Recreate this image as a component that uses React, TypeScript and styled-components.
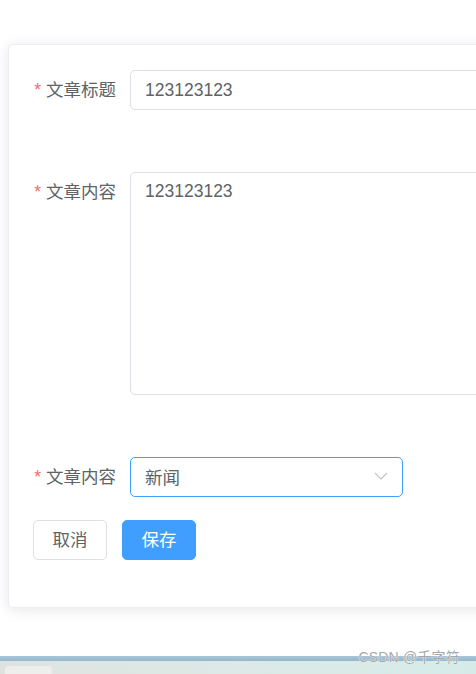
import styled, { createGlobalStyle } from 'styled-components'

const GlobalStyle = createGlobalStyle`
  html, body {
    margin: 0;
    padding: 0;
    background: #ffffff;
    overflow: hidden;
  }

  body {
    font-family: 'Liberation Sans', 'Noto Sans CJK SC', sans-serif;
  }
`

const Page = styled.div`
  width: 476px;
  height: 674px;
  display: flex;
  flex-direction: column;
  overflow: hidden;
  position: relative;
`

const Main = styled.div`
  flex: 1;
  padding: 44px 0 0 8px;
  box-sizing: border-box;
`

const Card = styled.div`
  width: 540px;
  box-sizing: border-box;
  background: #ffffff;
  border: 1px solid #ebeef5;
  border-radius: 5px;
  box-shadow: 0 2px 14px rgba(0, 0, 0, 0.1);
  padding: 25px 24px 47px;
`

const FormItem = styled.div<{ $gap: number }>`
  display: flex;
  align-items: flex-start;
  margin-bottom: ${(props) => props.$gap}px;
`

const Label = styled.label`
  width: 97px;
  flex-shrink: 0;
  box-sizing: border-box;
  padding-right: 14px;
  line-height: 40px;
  font-size: 17.5px;
  color: #606266;
  text-align: right;
  white-space: nowrap;

  span {
    color: #f56c6c;
    margin-right: 5px;
  }
`

const Input = styled.div`
  flex: 1;
  height: 40px;
  box-sizing: border-box;
  border: 1px solid #dcdfe6;
  border-radius: 5px;
  padding: 0 15px 0 14px;
  line-height: 38px;
  font-size: 17.5px;
  color: #606266;
`

const TextArea = styled.div`
  flex: 1;
  height: 223px;
  box-sizing: border-box;
  border: 1px solid #dcdfe6;
  border-radius: 5px;
  padding: 5px 15px 5px 14px;
  line-height: 26px;
  font-size: 17.5px;
  color: #606266;
`

const Select = styled.div`
  width: 273px;
  height: 40px;
  box-sizing: border-box;
  border: 1px solid #409eff;
  border-radius: 5px;
  padding: 0 14px 2px 14px;
  display: flex;
  align-items: center;
  justify-content: space-between;
  font-size: 17.5px;
  color: #606266;
`

const Buttons = styled.div`
  display: flex;
  gap: 15px;
`

const Button = styled.div<{ $primary?: boolean }>`
  width: 74px;
  height: 40px;
  box-sizing: border-box;
  border-radius: 5px;
  border: 1px solid ${(props) => (props.$primary ? '#409eff' : '#dcdfe6')};
  background: ${(props) => (props.$primary ? '#409eff' : '#ffffff')};
  color: ${(props) => (props.$primary ? '#ffffff' : '#606266')};
  font-size: 17.5px;
  padding-bottom: 4px;
  display: flex;
  align-items: center;
  justify-content: center;
`

const Taskbar = styled.div`
  height: 18px;
  flex-shrink: 0;
  display: flex;
  flex-direction: column;
`

const TaskbarLine = styled.div`
  height: 5px;
  background: linear-gradient(to bottom, #a9c6d8, #93b7cd);
`

const TaskbarBody = styled.div`
  flex: 1;
  background: linear-gradient(to right, #dfe3e0, #dce9e6 50%, #d6ebe8);
  padding: 5px 0 0 5px;
`

const TaskTab = styled.div`
  width: 46px;
  height: 100%;
  background: #eeefed;
  border-radius: 4px 4px 0 0;
  border-right: 2px solid #e6e8e6;
`

const Watermark = styled.div`
  position: absolute;
  right: 16px;
  bottom: 8px;
  font-size: 14px;
  color: #a4a8ab;
  letter-spacing: 0.2px;
  text-shadow: 0 0 1px #ffffff, 0 0 1px #ffffff;
`

const Chevron = () => (
  <svg width="14" height="8" viewBox="0 0 14 8" fill="none">
    <path d="M1 1l6 6 6-6" stroke="#c0c4cc" strokeWidth="1.2" />
  </svg>
)

export default function App() {
  return (
    <Page>
      <GlobalStyle />
      <Main>
        <Card>
          <FormItem $gap={62}>
            <Label>
              <span>*</span>文章标题
            </Label>
            <Input>123123123</Input>
          </FormItem>
          <FormItem $gap={62}>
            <Label>
              <span>*</span>文章内容
            </Label>
            <TextArea>123123123</TextArea>
          </FormItem>
          <FormItem $gap={23}>
            <Label>
              <span>*</span>文章内容
            </Label>
            <Select>
              新闻
              <Chevron />
            </Select>
          </FormItem>
          <Buttons>
            <Button>取消</Button>
            <Button $primary>保存</Button>
          </Buttons>
        </Card>
      </Main>
      <Taskbar>
        <TaskbarLine />
        <TaskbarBody>
          <TaskTab />
        </TaskbarBody>
      </Taskbar>
      <Watermark>CSDN @千字符</Watermark>
    </Page>
  )
}
